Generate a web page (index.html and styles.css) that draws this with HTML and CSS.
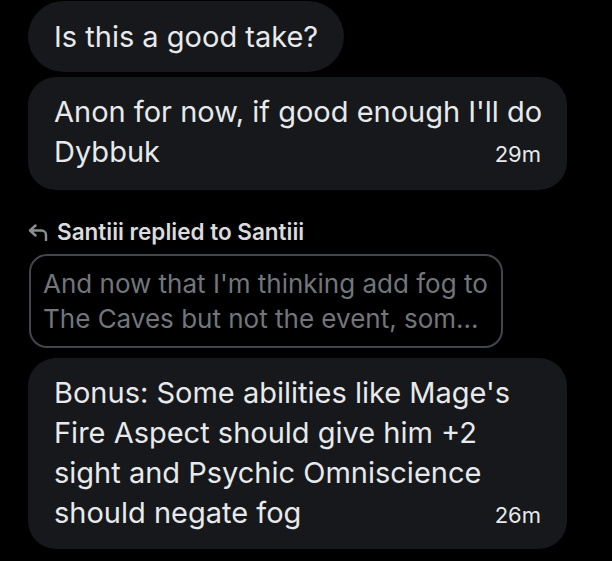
FILE: index.html
```html
<!DOCTYPE html>
<html lang="en">
<head>
    <meta charset="UTF-8">
    <meta name="viewport" content="width=device-width, initial-scale=1.0">
    <title>Messages</title>
    <link rel="stylesheet" href="styles.css">
</head>
<body>
    <div class="thread">
        <div class="bubble first">
            <div class="line">Is this a good take?</div>
        </div>
        <div class="bubble">
            <div class="line">Anon for now, if good enough I'll do</div>
            <div class="line last"><span>Dybbuk</span><span class="time">29m</span></div>
        </div>

        <div class="reply-head">
            <svg class="reply-icon" viewBox="0 0 20 17" width="20" height="17">
                <path d="M7.5 1.5 L2 6.5 L7.5 11.5 M2.5 6.5 H13.5 A4.5 4.5 0 0 1 18 11 V16.5" fill="none" stroke="currentColor" stroke-width="2.4" stroke-linecap="round" stroke-linejoin="round"/>
            </svg>
            <span>Santiii replied to Santiii</span>
        </div>
        <div class="quote">
            <div>And now that I'm thinking add fog to</div>
            <div>The Caves but not the event, som...</div>
        </div>

        <div class="bubble tall">
            <div class="line">Bonus: Some abilities like Mage's</div>
            <div class="line">Fire Aspect should give him +2</div>
            <div class="line">sight and Psychic Omniscience</div>
            <div class="line last"><span>should negate fog</span><span class="time">26m</span></div>
        </div>
    </div>
</body>
</html>
```

FILE: styles.css
```css
body {
    margin: 0;
    background: #000;
    font-family: 'Inter', 'Liberation Sans', sans-serif;
    color: #e7e9ea;
}
.thread {
    display: flex;
    flex-direction: column;
    align-items: flex-start;
    padding: 1px 0 0 28px;
}
.bubble {
    box-sizing: border-box;
    width: 539px;
    margin-bottom: 5px;
    padding: 15px 26px 16px 26px;
    background: #16181c;
    border-radius: 28px;
    font-size: 29px;
    line-height: 40px;
}
.bubble.first {
    width: auto;
    border-radius: 36px;
    padding: 16px 26px 15px 26px;
}
.bubble.tall { padding: 15px 26px 14px 26px; }
.line { white-space: nowrap; }
.line.last {
    display: flex;
    justify-content: space-between;
    align-items: baseline;
}
.time {
    font-size: 22px;
}
.reply-head {
    display: flex;
    align-items: center;
    gap: 9px;
    margin: 23px 0 8px 0;
    font-size: 22.5px;
    font-weight: 600;
    line-height: 28px;
    color: #d9dbdd;
}
.reply-icon { color: #8b8f93; }
.quote {
    box-sizing: border-box;
    width: 474px;
    margin: 0 0 10px 1px;
    padding: 10px 12px;
    border: 2px solid #42454a;
    border-radius: 18px;
    color: #71767b;
    font-size: 26px;
    line-height: 35px;
}
```
